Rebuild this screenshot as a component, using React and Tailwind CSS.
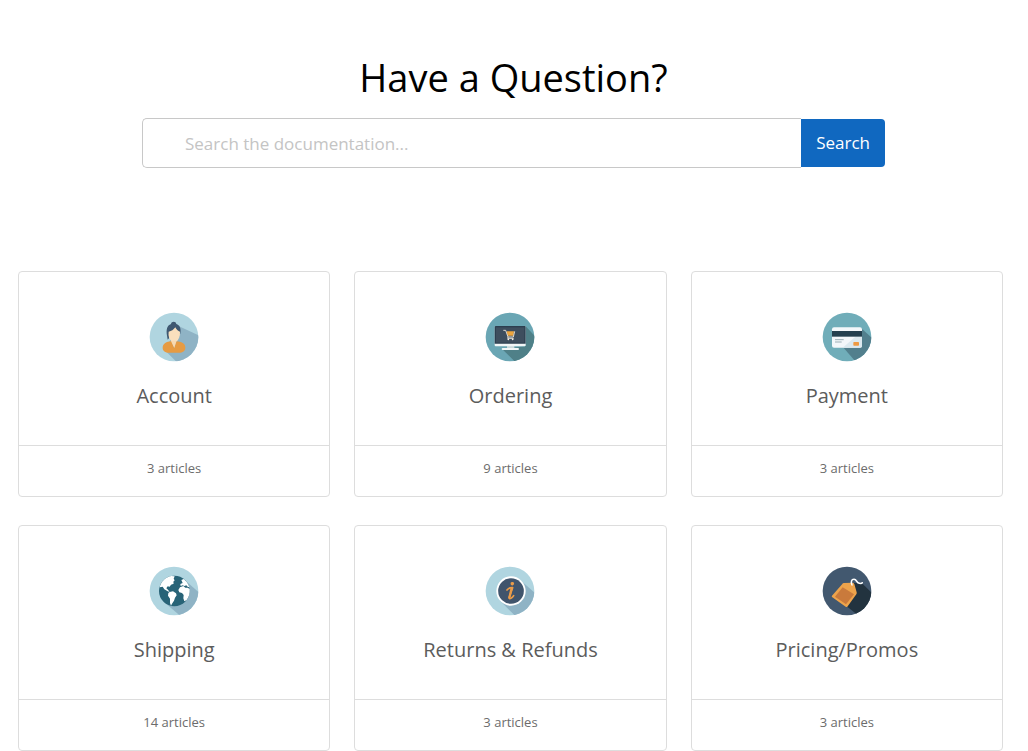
import React from "react";

function Badge({ fill, children, id }) {
  return (
    <svg viewBox="16 15 150 150" className="h-[50px] w-[50px]" aria-hidden="true">
      <clipPath id={id}>
        <circle cx="91" cy="90" r="73" />
      </clipPath>
      <circle cx="91" cy="90" r="73" fill={fill} />
      <g clipPath={`url(#${id})`}>{children}</g>
    </svg>
  );
}

function AccountIcon() {
  return (
    <Badge id="account" fill="#b0d5e0">
      <path d="M106 58L172 88V170H104L62 128Z" fill="#8fb3c5" />
      <path d="M70 86C67 68 70 55 82 51C83 42 97 42 98 51C108 54 113 64 110 80H76V94L72 98Z" fill="#3f5871" />
      <path d="M83 94H98V106L91 120L81 106Z" fill="#f3cfa0" />
      <path d="M75 74C83 73 90 68 95 61C98 68 103 72 109 74C110 88 105 98 97 105C93 108 88 107 84 103C77 96 73 88 75 74Z" fill="#f9dfbd" />
      <path d="M82 103L91 122L99 103C113 104 125 109 125 122C125 132 117 137 106 137H76C65 137 57 132 57 122C57 110 69 104 82 103Z" fill="#e69b43" />
      <path d="M83 101H98L92 123Z" fill="#f7d9b2" />
    </Badge>
  );
}

function OrderingIcon() {
  return (
    <Badge id="ordering" fill="#6aa6b4">
      <path d="M138 58L172 94V170H112L68 127L137 118Z" fill="#4f8088" />
      <path d="M82 117H104V125H82Z" fill="#c9d9dc" />
      <rect x="45" y="57" width="93" height="61" rx="3" fill="#f2f6f7" />
      <path d="M48 57H135Q138 57 138 60V110H45V60Q45 57 48 57Z" fill="#2c3f50" />
      <rect x="49" y="61" width="85" height="46" fill="#3e4e5e" />
      <rect x="66" y="123" width="52" height="6" rx="3" fill="#f2f6f7" />
      <path d="M81 73H103L101 86H84Z" fill="#eda53e" />
      <path d="M71 70H78L85 90H101L105 73M85 90L84 94H102" fill="none" stroke="#f8efe1" strokeWidth="2.6" />
      <circle cx="86" cy="97" r="2.6" fill="#f8efe1" />
      <circle cx="99" cy="97" r="2.6" fill="#f8efe1" />
    </Badge>
  );
}

function PaymentIcon() {
  return (
    <Badge id="payment" fill="#70adb9">
      <path d="M134 64L172 98V170H122L78 119Z" fill="#527f8d" />
      <rect x="46" y="61" width="90" height="61" rx="6" fill="#f3f7fa" />
      <path d="M78 122L116 89H136V116Q136 122 130 122Z" fill="#dce9ef" />
      <rect x="46" y="72" width="90" height="17" fill="#24404f" />
      <path d="M55 98H81M55 105H75" stroke="#8da2aa" strokeWidth="2.6" />
      <rect x="110" y="105" width="17" height="11" rx="2" fill="#ee9a43" />
    </Badge>
  );
}

function ShippingIcon() {
  return (
    <Badge id="shipping" fill="#b0d5e0">
      <path d="M124 58L172 100V170H116L61 123Z" fill="#8fb3c5" />
      <circle cx="92" cy="90" r="46" fill="#286377" />
      <path d="M48 79C52 62 65 48 83 45L93 46L90 53L93 58L89 62L90 68L82 71L78 77L72 76L68 82L73 86L78 93L72 91L62 85L57 77Z" fill="#fff" />
      <path d="M78 93L88 91L97 97L99 103L94 110L91 119L85 128L82 134L79 126L79 113L73 104L74 96Z" fill="#fff" />
      <path d="M113 57L120 54C128 60 134 68 137 79L132 77L128 73L122 75L117 73L111 75L110 69L117 66Z" fill="#fff" />
      <path d="M109 79L119 75L125 80L132 80L138 84C139 96 136 108 129 117L122 121L119 112L120 102L115 96L107 94L104 87Z" fill="#fff" />
    </Badge>
  );
}

function ReturnsIcon() {
  return (
    <Badge id="returns" fill="#b0d5e0">
      <path d="M124 59L172 101V170H112L62 120Z" fill="#8fb3c5" />
      <circle cx="94" cy="90" r="44" fill="#fff" />
      <circle cx="94" cy="90" r="38.5" fill="#40546c" />
      <ellipse cx="98" cy="68" rx="5.5" ry="5" transform="rotate(-20 98 68)" fill="#e99b49" />
      <path d="M82 87Q88 79 99 80Q94 94 89 108Q88 115 94 112Q99 109 102 104" fill="none" stroke="#e99b49" strokeWidth="5" strokeLinecap="round" strokeLinejoin="round" />
      <path d="M96 82L89 110" stroke="#e99b49" strokeWidth="7" strokeLinecap="round" />
    </Badge>
  );
}

function PricingIcon() {
  return (
    <Badge id="pricing" fill="#42586f">
      <path d="M112 66L135 66L172 102V170H133L89 135Z" fill="#22333f" />
      <path d="M77 69Q78 66 82 66L108 65Q112 66 113 69L120 94Q121 97 119 100L92 137Q90 139 87 137L47 109Q44 107 46 104Z" fill="#eda34b" />
      <path d="M78 79L112 100L88 130L55 107Z" fill="#c97a3c" />
      <path d="M106 72C102 63 104 55 112 55C121 55 119 66 128 67C133 68 136 67 137 65" fill="none" stroke="#fff" strokeWidth="4.5" strokeLinecap="round" />
    </Badge>
  );
}

const topics = [
  { title: "Account", count: 3, Icon: AccountIcon },
  { title: "Ordering", count: 9, Icon: OrderingIcon },
  { title: "Payment", count: 3, Icon: PaymentIcon },
  { title: "Shipping", count: 14, Icon: ShippingIcon },
  { title: "Returns & Refunds", count: 3, Icon: ReturnsIcon },
  { title: "Pricing/Promos", count: 3, Icon: PricingIcon },
];

function TopicCard({ title, count, Icon }) {
  return (
    <a href="#" className="flex flex-col rounded border border-[#dddddd] bg-white text-center">
      <div className="flex flex-col items-center px-4 pt-10 pb-[35px]">
        <Icon />
        <h2 className="mt-5 text-[20px] leading-7 text-[#5c5c5c]">{title}</h2>
      </div>
      <p className="border-t border-[#dddddd] pt-3 pb-[18px] text-[13px] leading-5 text-[#6c6c6c]">
        {count} articles
      </p>
    </a>
  );
}

export default function App() {
  return (
    <div className="bg-white font-['Open_Sans','Noto_Sans',sans-serif]">
      <header className="pt-[52px] pr-[25px] pl-6">
        <h1 className="text-center text-[38px] leading-[50px] text-black">Have a Question?</h1>
        <form className="mx-auto mt-4 flex max-w-[743px] items-center" onSubmit={(e) => e.preventDefault()}>
          <input
            type="search"
            aria-label="Search the documentation"
            placeholder="Search the documentation..."
            className="h-[50px] min-w-0 flex-1 rounded-l-[5px] border border-r-0 border-[#c8c8c8] px-[42px] text-[17px] text-[#333333] outline-none placeholder:text-[#c4c4c4]"
          />
          <button type="submit" className="h-12 rounded-r bg-[#1068c0] px-[15px] text-[17px] text-white">
            Search
          </button>
        </form>
      </header>
      <main className="mt-[103px] grid grid-cols-3 gap-x-6 gap-y-7 pr-[25px] pl-[18px]">
        {topics.map((topic) => (
          <TopicCard key={topic.title} {...topic} />
        ))}
      </main>
    </div>
  );
}
